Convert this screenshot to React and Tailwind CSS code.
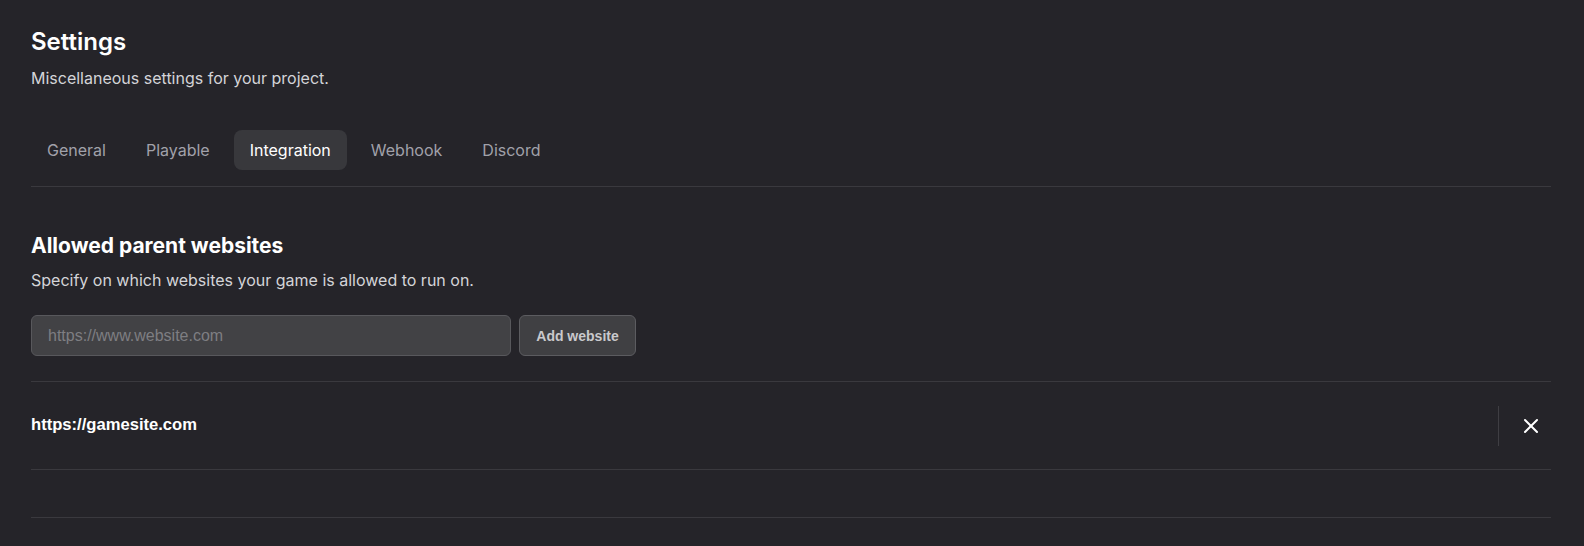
import { X } from 'lucide-react';

const tabs = ['General', 'Playable', 'Integration', 'Webhook', 'Discord'];

export default function App() {
  const active = 'Integration';

  return (
    <div className="min-h-[546px] bg-[#252429] pl-[31px] pr-[33px] pt-[26px]" style={{ fontFamily: 'Inter, sans-serif' }}>
      <h1 className="text-2xl font-semibold text-white">Settings</h1>
      <p className="mt-2 text-base text-[#d4d4d8]">Miscellaneous settings for your project.</p>

      <div className="mt-[40px] border-b border-[#3a393e] pb-4">
        <div className="flex gap-2">
          {tabs.map((t) => (
            <button
              key={t}
              className={
                t === active
                  ? 'h-10 rounded-lg bg-[#38383c] px-4 text-base text-white'
                  : 'h-10 rounded-lg px-4 text-base text-[#a1a1aa]'
              }
            >
              {t}
            </button>
          ))}
        </div>
      </div>

      <h2 className="mt-[45px] text-[21px] font-bold leading-7 text-white">Allowed parent websites</h2>
      <p className="mt-2 text-base text-[#d4d4d8]">Specify on which websites your game is allowed to run on.</p>

      <div className="mt-[23px] flex gap-2">
        <input
          type="text"
          placeholder="https://www.website.com"
          className="h-[41px] w-[480px] rounded-md border border-[#58585c] bg-[#424245] px-4 text-base text-white placeholder-[#7e7e82] outline-none"
          style={{ fontFamily: '"Liberation Sans", Arial, sans-serif' }}
        />
        <button
          className="h-[41px] w-[117px] rounded-md border border-[#5c5c60] bg-[#404043] text-sm font-bold text-[#c9c9cc]"
          style={{ fontFamily: '"Liberation Sans", Arial, sans-serif' }}
        >
          Add website
        </button>
      </div>

      <div className="mt-[25px] border-t border-[#3a393e]">
        <div className="flex h-[88px] items-center border-b border-[#3a393e]">
          <span
            className="flex-1 text-[16.6px] font-bold text-white"
            style={{ fontFamily: '"Liberation Sans", Arial, sans-serif' }}
          >
            https://gamesite.com
          </span>
          <div className="h-10 w-px bg-[#3f3e43]" />
          <button className="ml-3 flex h-10 w-10 items-center justify-center text-white">
            <X size={24} strokeWidth={2} />
          </button>
        </div>
        <div className="h-12 border-b border-[#3a393e]" />
      </div>
    </div>
  );
}
